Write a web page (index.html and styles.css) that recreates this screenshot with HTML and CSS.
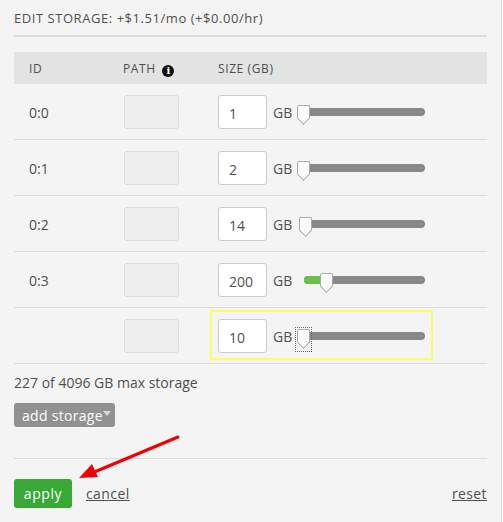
FILE: index.html
```html
<!DOCTYPE html>
<html>
<head>
<meta charset="utf-8">
<link rel="stylesheet" href="styles.css">
</head>
<body>
<div class="panel">
  <h2 class="title">EDIT STORAGE: +$1.51/mo (+$0.00/hr)</h2>
  <div class="table">
    <div class="row head">
      <div class="c-id">ID</div>
      <div class="c-path">PATH <span class="info">i</span></div>
      <div class="c-size">SIZE (GB)</div>
    </div>
    <div class="row">
      <div class="c-id">0:0</div>
      <div class="c-path"><div class="pathbox"></div></div>
      <div class="c-size"><div class="size"><input class="num" value="1"><span class="gb">GB</span><div class="slider"><div class="fill" style="width:0px"></div><div class="thumb" style="left:0px"></div></div></div></div>
    </div>
    <div class="row">
      <div class="c-id">0:1</div>
      <div class="c-path"><div class="pathbox"></div></div>
      <div class="c-size"><div class="size"><input class="num" value="2"><span class="gb">GB</span><div class="slider"><div class="fill" style="width:0px"></div><div class="thumb" style="left:0px"></div></div></div></div>
    </div>
    <div class="row">
      <div class="c-id">0:2</div>
      <div class="c-path"><div class="pathbox"></div></div>
      <div class="c-size"><div class="size"><input class="num" value="14"><span class="gb">GB</span><div class="slider"><div class="fill" style="width:0px"></div><div class="thumb" style="left:2px"></div></div></div></div>
    </div>
    <div class="row">
      <div class="c-id">0:3</div>
      <div class="c-path"><div class="pathbox"></div></div>
      <div class="c-size"><div class="size"><input class="num" value="200"><span class="gb">GB</span><div class="slider"><div class="fill" style="width:23px"></div><div class="thumb" style="left:23px"></div></div></div></div>
    </div>
    <div class="row">
      <div class="c-id"></div>
      <div class="c-path"><div class="pathbox"></div></div>
      <div class="c-size"><div class="size hl"><input class="num" value="10"><span class="gb">GB</span><div class="slider"><div class="fill" style="width:0px"></div><div class="thumb focus" style="left:0px"></div></div></div></div>
    </div>
  </div>
  <p class="max">227 of 4096 GB max storage</p>
  <button class="add">add storage<span class="caret"></span></button>
  <div class="actions">
    <button class="apply">apply</button>
    <a class="link" href="#">cancel</a>
    <a class="link reset" href="#">reset</a>
  </div>
</div>
<svg class="arrow" width="503" height="522" viewBox="0 0 503 522">
  <line x1="178" y1="437" x2="92" y2="473" stroke="#f20000" stroke-width="3" stroke-linecap="round"/>
  <polygon points="79,478 98,477 92,464" fill="#f20000"/>
</svg>
</body>
</html>
```
FILE: styles.css
```css
html, body {
  margin: 0;
  padding: 0;
  background: #f4f4f4;
}
body {
  font-family: "Open Sans", "DejaVu Sans", sans-serif;
  color: #505050;
  position: relative;
  width: 503px;
  height: 522px;
  overflow: hidden;
}
.panel {
  width: 502px;
  height: 522px;
  box-sizing: border-box;
  border-right: 1px solid #dcdcdc;
  padding: 9px 14px 0 14px;
}
.title {
  margin: 0;
  font-size: 13px;
  font-weight: normal;
  line-height: 18px;
  letter-spacing: 0.55px;
  color: #505050;
  padding-bottom: 8px;
  border-bottom: 2px solid #dcdcdc;
}
.table {
  margin-top: 15px;
}
.row {
  display: grid;
  grid-template-columns: 109px 95px 1fr;
  align-items: center;
  height: 56px;
  box-sizing: border-box;
  border-bottom: 1px solid #dcdcdc;
  font-size: 14px;
}
.row.head {
  height: 32px;
  background: #e3e3e3;
  border-bottom: none;
  font-size: 12px;
  letter-spacing: 0.6px;
  color: #505050;
}
.row .c-id {
  padding-left: 15px;
}
.row:not(.head) {
  padding-top: 1px;
}
.info {
  display: inline-flex;
  align-items: center;
  justify-content: center;
  width: 12px;
  height: 12px;
  border-radius: 50%;
  background: #111;
  color: #fff;
  font-family: "DejaVu Serif", serif;
  font-weight: bold;
  font-size: 10px;
  line-height: 12px;
  letter-spacing: 0;
  vertical-align: -1px;
  margin-left: 3px;
}
.pathbox {
  width: 55px;
  height: 34px;
  box-sizing: border-box;
  background: #eeeeee;
  border: 1px solid #dddddd;
  border-radius: 3px;
  margin-left: 1px;
}
.size {
  display: flex;
  align-items: center;
  width: 207px;
  height: 34px;
}
.size.hl {
  position: relative;
}
.size.hl::before {
  content: "";
  position: absolute;
  top: -9px;
  bottom: -7px;
  left: -8px;
  right: -8px;
  border: 2px solid #fcfc6a;
  pointer-events: none;
}
.num {
  width: 49px;
  height: 34px;
  box-sizing: border-box;
  border: 1px solid #cccccc;
  border-radius: 3px;
  background: #fff;
  padding: 2px 0 0 10px;
  font-family: "Open Sans", sans-serif;
  font-size: 14px;
  color: #505050;
  outline: none;
}
.gb {
  margin-left: 6px;
  font-size: 14px;
  color: #505050;
}
.slider {
  position: relative;
  width: 121px;
  height: 8px;
  margin-left: 12px;
  background: #888888;
  border-radius: 4px;
}
.fill {
  position: absolute;
  left: 0;
  top: 0;
  height: 8px;
  background: #6cbf4b;
  border-radius: 4px 0 0 4px;
}
.thumb {
  position: absolute;
  top: -3px;
  width: 13px;
  height: 21px;
  margin-left: -7px;
}
.thumb::before {
  content: "";
  position: absolute;
  left: 0;
  top: 0;
  width: 11px;
  height: 13px;
  background: #fbfbfb;
  border: 1px solid #aaa;
  border-bottom: none;
  border-radius: 2px 2px 0 0;
}
.thumb::after {
  content: "";
  position: absolute;
  left: 2px;
  top: 9px;
  width: 8px;
  height: 8px;
  background: #fbfbfb;
  border-right: 1px solid #aaa;
  border-bottom: 1px solid #aaa;
  transform: rotate(45deg);
}
.thumb.focus {
  outline: 1px dotted #666;
  outline-offset: 1px;
}
.max {
  margin: 10px 0 0 0;
  font-size: 14px;
  line-height: 18px;
  color: #505050;
}
.add {
  margin-top: 11px;
  display: flex;
  align-items: center;
  height: 24px;
  width: 101px;
  padding: 0 0 0 8px;
  border: none;
  border-radius: 3px;
  background: #919191;
  color: #fff;
  font-family: "Open Sans", sans-serif;
  font-size: 14px;
  letter-spacing: 0.3px;
}
.caret {
  width: 0;
  height: 0;
  border-left: 4px solid transparent;
  border-right: 4px solid transparent;
  border-top: 5px solid #d8d8d8;
  margin-left: 0;
  margin-top: -4px;
}
.actions {
  margin-top: 31px;
  border-top: 1px solid #dcdcdc;
  padding-top: 20px;
  display: flex;
  align-items: center;
}
.apply {
  width: 58px;
  height: 29px;
  border: none;
  border-radius: 3px;
  background: #38a935;
  color: #fff;
  font-family: "Open Sans", sans-serif;
  font-size: 14px;
  letter-spacing: 0.6px;
  padding: 0;
}
.link {
  color: #505050;
  font-size: 14px;
  letter-spacing: 0.4px;
  text-decoration: underline;
  margin-left: 14px;
}
.reset {
  margin-left: auto;
}
.arrow {
  position: absolute;
  left: 0;
  top: 0;
  pointer-events: none;
}
```
